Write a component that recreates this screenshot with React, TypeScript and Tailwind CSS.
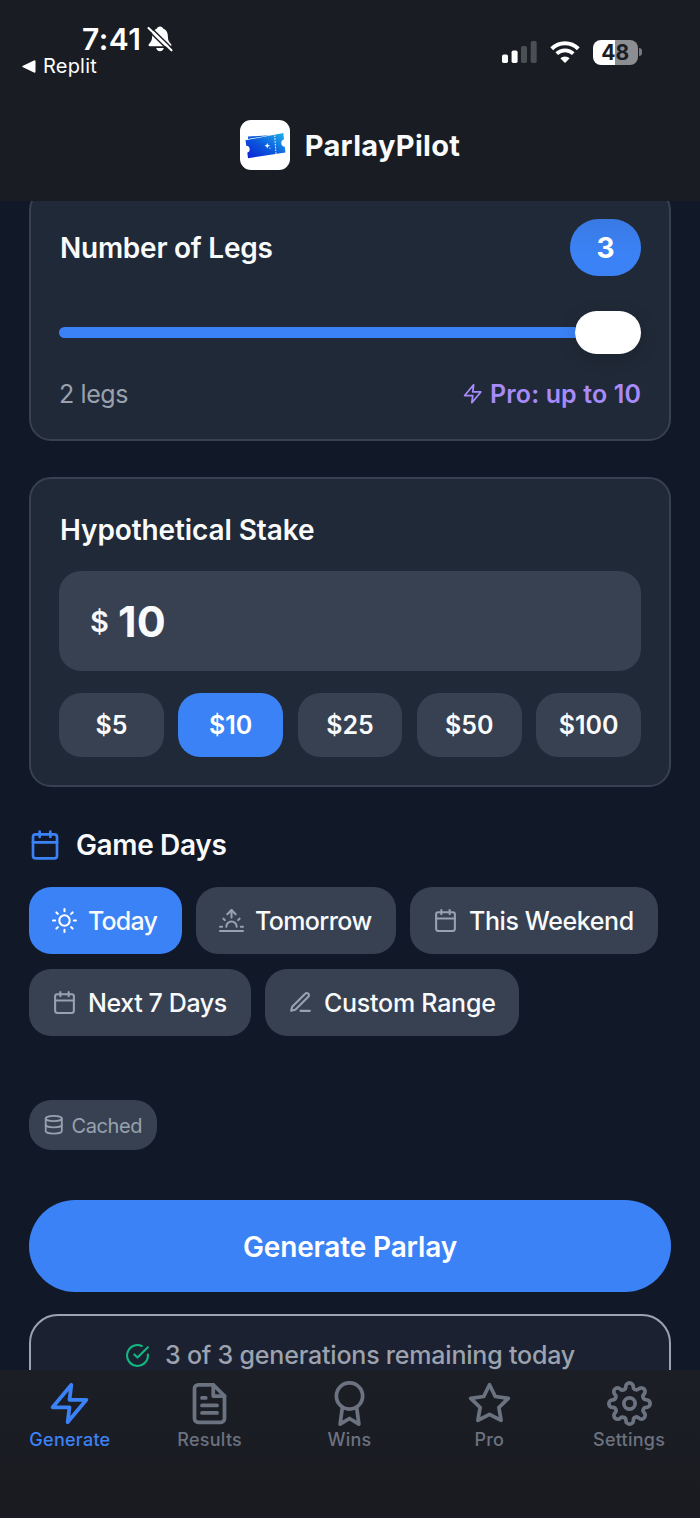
import type { ReactNode } from 'react';
import {
  FiAward,
  FiCalendar,
  FiCheckCircle,
  FiDatabase,
  FiEdit3,
  FiFileText,
  FiSettings,
  FiStar,
  FiSun,
  FiSunrise,
  FiZap,
} from 'react-icons/fi';

const stakes = [5, 10, 25, 50, 100];

const StatusBar = () => {
  return (
    <div className="flex h-[88px] justify-between pl-[22px] pr-[58px] text-white">
      <div className="pt-[22px]">
        <div className="flex h-[34px] items-center gap-[5px] pl-[60px]">
          <span className="text-[30px] font-semibold leading-none tracking-[0.5px]">7:41</span>
          <svg className="h-[28px] w-[26px]" viewBox="0 0 26 28">
            <path
              d="M13 1.5c-1.8 0-2.8 1-3 2.1C6.600 4.700 5.200 7.700 5.100 11.500c-.1 4-.9 5.200-2.900 7.200-1.200 1.200-.8 2.600.8 2.600h20c1.600 0 2-1.400.8-2.600-2-2-2.800-3.200-2.900-7.200-.1-3.800-1.500-6.800-4.900-7.900-.2-1.100-1.200-2.100-3-2.100zM9.200 23h7.600c-.3 2-1.800 3.200-3.800 3.200s-3.500-1.200-3.800-3.200z"
              fill="white"
            />
            <path d="M3 1.500 26 24" stroke="#191d23" strokeWidth="1.500" />
            <path d="M0 4.500 23 27" stroke="#191d23" strokeWidth="1.500" />
            <path d="M1.500 3 24.500 25.300" stroke="white" strokeWidth="2.100" strokeLinecap="round" />
          </svg>
        </div>
        <div className="flex h-[20px] items-center gap-[7px]">
          <svg className="h-[13px] w-[14px]" viewBox="0 0 14 13">
            <path d="M1 5.700 12 .400Q13.500 0 13.500 1.500v10q0 1.500-1.500 1.100L1 7.300q-1.500-.8 0-1.600z" fill="white" />
          </svg>
          <span className="text-[20px] leading-none tracking-[0.2px]">Replit</span>
        </div>
      </div>
      <div className="mt-[39px] flex h-[26px] items-center gap-[13px]">
        <svg className="h-[22px] w-[35px]" viewBox="0 0 35 22">
          <rect x="0" y="13.500" width="6" height="8.500" rx="1.700" fill="white" />
          <rect x="9.600" y="9.500" width="6" height="12.500" rx="1.700" fill="white" />
          <rect x="19" y="5" width="6" height="17" rx="1.700" fill="#4b4e53" />
          <rect x="28.700" y="0" width="6" height="22" rx="1.700" fill="#4b4e53" />
        </svg>
        <svg className="h-[22px] w-[30px]" viewBox="0 0 30 22">
          <path d="M1.700 7.700a19 19 0 0 1 26.600 0" fill="none" stroke="white" strokeWidth="4" />
          <path d="M6.700 12.700a12 12 0 0 1 16.600 0" fill="none" stroke="white" strokeWidth="3.800" />
          <path d="M10.300 17.300a6.800 6.800 0 0 1 9.400 0L15 22z" fill="white" />
        </svg>
        <div className="flex items-center gap-[1.500px]">
          <div className="flex h-[25px] w-[44.500px] items-center justify-center rounded-[8px] bg-linear-to-r from-white from-49% to-[#8d8e91] to-49% text-[21px] font-bold leading-none text-[#1a1d23]">
            48
          </div>
          <div className="h-[8px] w-[3px] rounded-r-full bg-[#77797c]" />
        </div>
      </div>
    </div>
  );
};

const Logo = () => {
  return (
    <div className="flex size-[50px] items-center justify-center rounded-[11px] bg-white">
      <svg className="size-[50px]" viewBox="0 0 50 50">
        <defs>
          <linearGradient id="ticket" x1="0" y1="1" x2="1" y2="0">
            <stop offset="0" stopColor="#0a1fd8" />
            <stop offset=".45" stopColor="#0b55dc" />
            <stop offset="1" stopColor="#1fb4ee" />
          </linearGradient>
        </defs>
        <path d="M8 16.500 30 15.200 8 19z" fill="#0a5bd8" />
        <path
          d="M5.500 20.300 43.300 13l.7 6.200a3.900 3.900 0 0 0 .8 7.600l.6 5.700L8 38.300l-.7-5.500a3.600 3.600 0 0 0-1-7z"
          fill="url(#ticket)"
        />
        <path d="M34.700 15.500 36 34" stroke="white" strokeWidth="1" strokeDasharray="1.600 1.200" />
        <path d="m27.300 23 .9 2 2 .7-2 .9-.9 2-.9-2-2-.9 2-.7z" fill="white" />
        <circle cx="30" cy="28.200" r=".7" fill="#8ec5f5" />
      </svg>
    </div>
  );
};

type CardProps = { className: string; children: ReactNode };

const Card = ({ className, children }: CardProps) => {
  return (
    <section className={`rounded-[22px] border-2 border-[#374151] bg-[#202937] px-[28px] ${className}`}>
      {children}
    </section>
  );
};

type ChipProps = { className: string; active?: boolean; icon: ReactNode; label: string };

const Chip = ({ className, active, icon, label }: ChipProps) => {
  return (
    <button
      className={`flex h-[67.500px] items-center gap-[11.500px] rounded-[22px] pl-[22.500px] text-[25px] font-medium text-gray-50 ${
        active ? 'bg-[#3b82f6]' : 'bg-[#374151]'
      } ${className}`}
    >
      <span className={active ? 'text-white' : 'text-gray-400'}>{icon}</span>
      <span className="mt-[2px] whitespace-nowrap">{label}</span>
    </button>
  );
};

const tabs = [
  { name: 'Generate', icon: FiZap },
  { name: 'Results', icon: FiFileText },
  { name: 'Wins', icon: FiAward },
  { name: 'Pro', icon: FiStar },
  { name: 'Settings', icon: FiSettings },
];

export default function App() {
  return (
    <div className="flex h-[1518px] w-[700px] flex-col overflow-hidden bg-[#111827] font-['Inter',sans-serif] text-gray-50">
      <header className="h-[201px] shrink-0 bg-[#191d23]">
        <StatusBar />
        <div className="mt-[31px] flex h-[51px] items-center justify-center gap-[15px]">
          <Logo />
          <h1 className="pt-[2px] text-[29px] font-bold tracking-[0.3px]">ParlayPilot</h1>
        </div>
      </header>

      <main className="min-h-0 flex-1 overflow-hidden px-[29px]">
        <Card className="-mt-[13px] h-[253px] pt-[29px]">
          <div className="flex h-[57px] items-center justify-between">
            <h2 className="pl-[1px] text-[28px] font-semibold tracking-[-0.25px]">Number of Legs</h2>
            <div className="flex h-[57px] w-[71px] items-center justify-center rounded-full bg-linear-to-b from-[#397ae3] to-[#3b82f6] to-60% text-[28px] font-bold text-white">
              3
            </div>
          </div>
          <div className="mt-[35px] flex h-[43px] items-center">
            <div className="h-[11px] flex-1 rounded-l-full bg-[#3b82f6]" />
            <div className="h-[43px] w-[66px] rounded-full bg-white shadow-[0_4px_18px_rgba(0,0,0,0.15)]" />
          </div>
          <div className="mt-[22px] flex h-[36px] items-center justify-between text-[25px]">
            <span className="pt-[1px] tracking-[-0.4px] text-gray-400">2 legs</span>
            <span className="flex items-center gap-[7px] font-semibold tracking-[0.120px] text-[#a78bfa]">
              <FiZap size={21.5} />
              <span className="pt-[1px]">Pro: up to 10</span>
            </span>
          </div>
        </Card>

        <Card className="mt-[36px] h-[310px] pt-[33px]">
          <h2 className="h-[34px] pl-[1px] text-[28px] font-semibold leading-[36px] tracking-[-0.1px]">
            Hypothetical Stake
          </h2>
          <div className="mt-[25px] flex h-[100px] items-center gap-[9px] rounded-[22px] bg-[#374151] pl-[31px]">
            <span className="pt-[2px] text-[29px] font-semibold">$</span>
            <span className="text-[43px] font-bold tracking-[0.3px]">10</span>
          </div>
          <div className="mt-[21.500px] grid grid-cols-5 gap-[14.400px]">
            {stakes.map((stake) => (
              <button
                key={stake}
                className={`h-[64.500px] rounded-[22px] pt-[1.500px] text-[25px] font-semibold ${
                  stake === 10 ? 'bg-[#3b82f6] text-white' : 'bg-[#374151]'
                }`}
              >
                ${stake}
              </button>
            ))}
          </div>
        </Card>

        <div className="mt-[40px] flex h-[36px] items-center gap-[15px]">
          <FiCalendar size={32} className="text-[#3b82f6]" />
          <h2 className="text-[28px] font-semibold tracking-[-0.35px]">Game Days</h2>
        </div>
        <div className="mt-[23.500px] flex flex-wrap gap-x-[14px] gap-y-[14.500px]">
          <Chip className="w-[153px] tracking-[-0.8px]" active icon={<FiSun size={25} />} label="Today" />
          <Chip className="w-[200px] tracking-[-0.6px]" icon={<FiSunrise size={25} />} label="Tomorrow" />
          <Chip className="w-[248px] tracking-[-0.4px]" icon={<FiCalendar size={25} />} label="This Weekend" />
          <Chip className="w-[222px] tracking-[-0.4px]" icon={<FiCalendar size={25} />} label="Next 7 Days" />
          <Chip className="w-[254px] tracking-[-0.25px]" icon={<FiEdit3 size={25} />} label="Custom Range" />
        </div>

        <div className="mt-[63.500px] flex h-[50px] w-[128px] items-center gap-[7px] rounded-[22px] bg-[#374151] pl-[14px] text-[20px] text-gray-400">
          <FiDatabase size={21.5} />
          <span className="mt-[2px] tracking-[-0.4px]">Cached</span>
        </div>

        <button className="mt-[50px] flex h-[92.500px] w-full items-center justify-center rounded-full bg-[#3b82f6] pt-[2px] text-[28px] font-semibold tracking-[-0.15px] text-white">
          Generate Parlay
        </button>

        <div className="mt-[21.500px] flex h-[84px] items-center justify-center gap-[15px] rounded-[29px] border-2 border-[#9ca3af] bg-[#1b2130] text-[25px] font-medium tracking-[-0.2px] text-[#9ca3af]">
          <FiCheckCircle size={25} className="text-[#10b981]" />
          3 of 3 generations remaining today
        </div>
      </main>

      <nav className="grid h-[148px] shrink-0 grid-cols-5 bg-linear-to-b from-[#1c1e26] to-[#191b20] pr-[1px] pt-[11px]">
        {tabs.map((tab, i) => (
          <div
            key={tab.name}
            className={`flex flex-col items-center text-[18px] font-medium tracking-[0.250px] ${
              i === 0 ? 'text-[#3b82f6]' : 'text-[#6b7280]'
            }`}
          >
            <tab.icon size={45} />
            <span>{tab.name}</span>
          </div>
        ))}
      </nav>
    </div>
  );
}
